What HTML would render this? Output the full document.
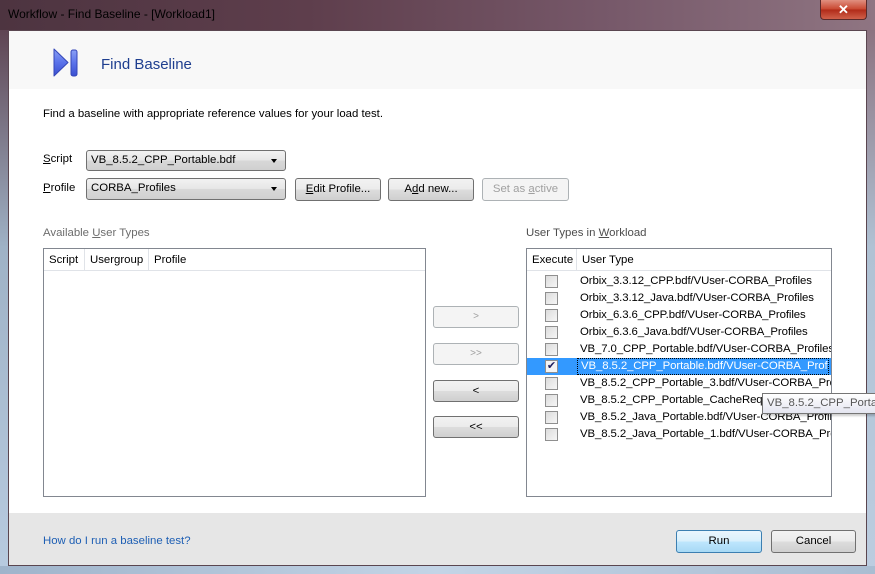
<!DOCTYPE html>
<html><head><meta charset="utf-8"><style>
*{box-sizing:border-box;margin:0;padding:0}
html,body{width:875px;height:574px;overflow:hidden}
body{font-family:"Liberation Sans",sans-serif;font-size:11.4px;color:#000;position:relative;background:#6e4a58}
.a{position:absolute}
.tbar{left:0;top:0;width:875px;height:30px;background:linear-gradient(90deg,#4d3440 0%,#5e3e4c 35%,#77596a 70%,#8f7582 100%)}
.frameL{left:0;top:30px;width:8px;height:544px;background:linear-gradient(180deg,#5e4452,#9fb2c6 40%,#b8cbe0)}
.frameR{left:867px;top:30px;width:8px;height:544px;background:linear-gradient(180deg,#8c7380,#b0c2d4 40%,#bccde0)}
.frameB{left:0;top:566px;width:875px;height:8px;background:linear-gradient(90deg,#9fb4cb,#c3d4e6 50%,#a9bdd2)}
.btn{position:absolute;border:1px solid #707070;border-radius:3px;background:linear-gradient(#f2f2f2 0%,#ebebeb 50%,#dddddd 51%,#cfcfcf 100%);text-align:center;line-height:20px}
.dis{border-color:#adb2b5;background:#f4f4f4;color:#a0a0a0}
.combo{position:absolute;border:1px solid #707070;border-radius:3px;background:linear-gradient(#f2f2f2,#e6e6e6 50%,#d8d8d8 51%,#d0d0d0);padding-left:4px;line-height:19px}
.combo:after{content:"";position:absolute;right:8px;top:8px;border-left:3.5px solid transparent;border-right:3.5px solid transparent;border-top:4px solid #000}
.list{position:absolute;border:1px solid #828790;background:#fff}
.hdr{position:absolute;top:0;height:22px;line-height:22px;border-right:1px solid #e0e3e8;padding-left:5px;border-bottom:1px solid #e0e3e8;background:#fff}
.row{position:absolute;left:0;width:305px;height:17px;line-height:17px}
.cb{position:absolute;left:18px;top:2px;width:13px;height:13px;border:1px solid #8f8f8f;background:linear-gradient(135deg,#dcdcdc,#f6f6f6)}
.ut{position:absolute;left:53px;top:0;white-space:nowrap;width:252px;overflow:hidden;letter-spacing:-0.1px}
</style></head><body>
<div class="a tbar"></div>
<div class="a" style="left:8px;top:7px;font-size:12px;color:#000">Workflow - Find Baseline - [Workload1]</div>
<div class="a" style="left:820px;top:0;width:47px;height:20px;border:1px solid #5b2a2a;border-top:none;border-radius:0 0 4px 4px;background:linear-gradient(#e09080,#c8452e 50%,#b02a18 51%,#d0604a);color:#fff;text-align:center;font-weight:bold;font-size:13px;line-height:19px">✕</div>
<div class="a frameL"></div><div class="a frameR"></div><div class="a frameB"></div>
<div class="a" style="left:8px;top:30px;width:859px;height:536px;background:#fff;border:1px solid #5a4650"></div>
<div class="a" style="left:9px;top:31px;width:857px;height:58px;background:#f8f8f8"></div>
<svg class="a" style="left:52px;top:47px" width="27" height="32"><defs><linearGradient id="g" x1="0" x2="0" y1="0" y2="1"><stop offset="0" stop-color="#8aa0f5"/><stop offset=".5" stop-color="#5a72ea"/><stop offset="1" stop-color="#3a4fd0"/></linearGradient></defs><path d="M2 2 L16 15.5 L2 29 Z" fill="url(#g)" stroke="#3446b8" stroke-linejoin="round"/><rect x="19" y="3" width="6" height="26" rx="2" fill="url(#g)" stroke="#3446b8"/></svg>
<div class="a" style="left:101px;top:56px;font-size:15px;color:#1e3e8f">Find Baseline</div>
<div class="a" style="left:43px;top:108px">Find a baseline with appropriate reference values for your load test.</div>
<div class="a" style="left:43px;top:153px"><u>S</u>cript</div>
<div class="combo" style="left:86px;top:150px;width:200px;height:21px">VB_8.5.2_CPP_Portable.bdf</div>
<div class="a" style="left:43px;top:182px"><u>P</u>rofile</div>
<div class="combo" style="left:86px;top:178px;width:200px;height:22px">CORBA_Profiles</div>
<div class="btn" style="left:295px;top:178px;width:86px;height:23px"><u>E</u>dit Profile...</div>
<div class="btn" style="left:388px;top:178px;width:86px;height:23px">A<u>d</u>d new...</div>
<div class="btn dis" style="left:482px;top:178px;width:87px;height:23px">Set as <u>a</u>ctive</div>
<div class="a" style="left:43px;top:227px;color:#6d6d6d">Available <u>U</u>ser Types</div>
<div class="list" style="left:43px;top:248px;width:383px;height:249px">
<div class="hdr" style="left:0;width:41px">Script</div>
<div class="hdr" style="left:41px;width:64px">Usergroup</div>
<div class="hdr" style="left:105px;width:276px;border-right:none">Profile</div>
</div>
<div class="btn dis" style="left:433px;top:306px;width:86px;height:22px;font-size:10px">&gt;</div>
<div class="btn dis" style="left:433px;top:343px;width:86px;height:22px;font-size:10px">&gt;&gt;</div>
<div class="btn" style="left:433px;top:380px;width:86px;height:22px">&lt;</div>
<div class="btn" style="left:433px;top:416px;width:86px;height:22px">&lt;&lt;</div>
<div class="a" style="left:526px;top:227px;color:#4d4d4d">User Types in <u>W</u>orkload</div>
<div class="list" style="left:526px;top:248px;width:306px;height:249px;overflow:hidden">
<div class="hdr" style="left:0;width:50px">Execute</div>
<div class="hdr" style="left:50px;width:255px;border-right:none">User Type</div>
<div class="row" style="top:24px"><div class="cb"></div><div class="ut">Orbix_3.3.12_CPP.bdf/VUser-CORBA_Profiles</div></div>
<div class="row" style="top:41px"><div class="cb"></div><div class="ut">Orbix_3.3.12_Java.bdf/VUser-CORBA_Profiles</div></div>
<div class="row" style="top:58px"><div class="cb"></div><div class="ut">Orbix_6.3.6_CPP.bdf/VUser-CORBA_Profiles</div></div>
<div class="row" style="top:75px"><div class="cb"></div><div class="ut">Orbix_6.3.6_Java.bdf/VUser-CORBA_Profiles</div></div>
<div class="row" style="top:92px"><div class="cb"></div><div class="ut">VB_7.0_CPP_Portable.bdf/VUser-CORBA_Profiles</div></div>
<div class="row" style="top:109px;background:#3399ff;color:#fff"><div class="cb" style="background:#f4f4f4;color:#202060;font-size:11px;line-height:11px;text-align:center">✔</div><div class="ut" style="left:50px;padding-left:3px;border:1px dotted #000;background:#3399ff;height:17px;line-height:15px">VB_8.5.2_CPP_Portable.bdf/VUser-CORBA_Profiles</div></div>
<div class="row" style="top:126px"><div class="cb"></div><div class="ut">VB_8.5.2_CPP_Portable_3.bdf/VUser-CORBA_Profiles</div></div>
<div class="row" style="top:143px"><div class="cb"></div><div class="ut">VB_8.5.2_CPP_Portable_CacheRequest.bdf</div></div>
<div class="row" style="top:160px"><div class="cb"></div><div class="ut">VB_8.5.2_Java_Portable.bdf/VUser-CORBA_Profiles</div></div>
<div class="row" style="top:177px"><div class="cb"></div><div class="ut">VB_8.5.2_Java_Portable_1.bdf/VUser-CORBA_Profiles</div></div>
</div>
<div class="a" style="left:762px;top:393px;width:120px;height:21px;border:1px solid #767676;background:linear-gradient(#fff,#e4e5f0);color:#575757;padding-left:4px;line-height:19px;white-space:nowrap;box-shadow:2px 2px 2px rgba(0,0,0,.2)">VB_8.5.2_CPP_Portable</div>
<div class="a" style="left:9px;top:513px;width:857px;height:52px;background:#e6e6e6"></div>
<div class="a" style="left:43px;top:535px;color:#1e5fb4">How do I run a baseline test?</div>
<div class="btn" style="left:676px;top:530px;width:86px;height:23px;border-color:#3c7fb1;background:linear-gradient(#eaf6fd,#d9f0fc 50%,#bee6fd 51%,#a7d9f5)">Run</div>
<div class="btn" style="left:771px;top:530px;width:85px;height:23px">Cancel</div>
</body></html>
